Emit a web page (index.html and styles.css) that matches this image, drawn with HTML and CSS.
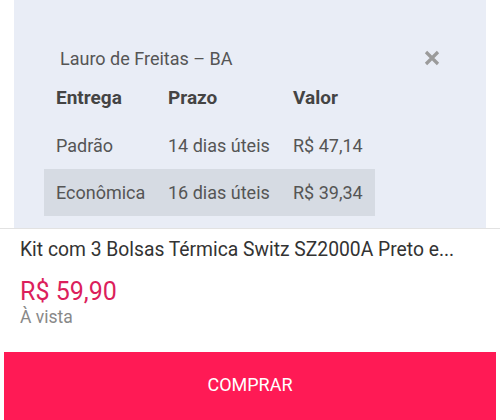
FILE: index.html
```html
<!DOCTYPE html>
<html lang="pt-BR">
<head>
    <meta charset="UTF-8">
    <meta name="viewport" content="width=device-width, initial-scale=1.0">
    <title>Frete</title>
    <link rel="stylesheet" href="styles.css">
</head>
<body>
    <div class="shipping">
        <div class="shipping-head">
            <span class="city">Lauro de Freitas – BA</span>
            <button class="close-btn" aria-label="Fechar">
                <svg width="16" height="16" viewBox="0 0 16 16">
                    <path d="M2 2 L14 14 M14 2 L2 14" stroke="#9b9b9b" stroke-width="3.2" stroke-linecap="butt"/>
                </svg>
            </button>
        </div>
        <table class="rates">
            <tr>
                <th class="col-type">Entrega</th>
                <th class="col-time">Prazo</th>
                <th class="col-value">Valor</th>
            </tr>
            <tr>
                <td>Padrão</td>
                <td>14 dias úteis</td>
                <td>R$ 47,14</td>
            </tr>
            <tr class="selected">
                <td>Econômica</td>
                <td>16 dias úteis</td>
                <td>R$ 39,34</td>
            </tr>
        </table>
    </div>

    <div class="product">
        <div class="product-name">Kit com 3 Bolsas Térmica Switz SZ2000A Preto e...</div>
        <div class="price">R$ 59,90</div>
        <div class="price-note">À vista</div>
    </div>

    <button class="buy-btn">COMPRAR</button>
</body>
</html>
```

FILE: styles.css
```css
body {
    margin: 0;
    padding: 0;
    width: 500px;
    height: 420px;
    overflow: hidden;
    font-family: Roboto, "Liberation Sans", sans-serif;
    background-color: #fff;
}

.shipping {
    background-color: #e9edf6;
    margin: 0 14px;
    height: 228px;
    padding: 47px 30px 0 30px;
    box-sizing: border-box;
}

.shipping-head {
    display: flex;
    justify-content: space-between;
    align-items: center;
    height: 22px;
    padding-left: 16px;
}

.city {
    font-size: 18px;
    color: #555;
}

.close-btn {
    background: none;
    border: none;
    padding: 0;
    margin-right: 16px;
    display: flex;
    cursor: pointer;
}

.rates {
    border-collapse: collapse;
    table-layout: fixed;
    width: 331px;
    margin-top: 4px;
}

.rates th,
.rates td {
    box-sizing: border-box;
    text-align: left;
    height: 48px;
    padding: 0 12px;
    font-size: 18px;
    color: #555;
    white-space: nowrap;
}

.rates th {
    font-weight: bold;
    font-size: 19px;
    color: #444;
}

.rates .col-type {
    width: 112px;
}

.rates .col-time {
    width: 125px;
}

.rates .col-value {
    width: 94px;
}

.rates .selected td {
    background-color: #d6dbe3;
    height: 47px;
}

.product {
    border-top: 1px solid #e2e2e2;
    padding: 8px 20px 0 20px;
}

.product-name {
    font-size: 19.3px;
    color: #333;
    line-height: 26px;
}

.price {
    font-size: 25px;
    color: #dc1f5c;
    margin-top: 15px;
    line-height: 28px;
}

.price-note {
    font-size: 17.5px;
    color: #888;
    line-height: 22px;
}

.buy-btn {
    display: block;
    width: 492px;
    height: 68px;
    margin: 24px 4px 0 4px;
    border: none;
    background-color: #ff1a55;
    color: #fff;
    font-family: Roboto, "Liberation Sans", sans-serif;
    font-size: 18px;
    padding-bottom: 4px;
}
```
